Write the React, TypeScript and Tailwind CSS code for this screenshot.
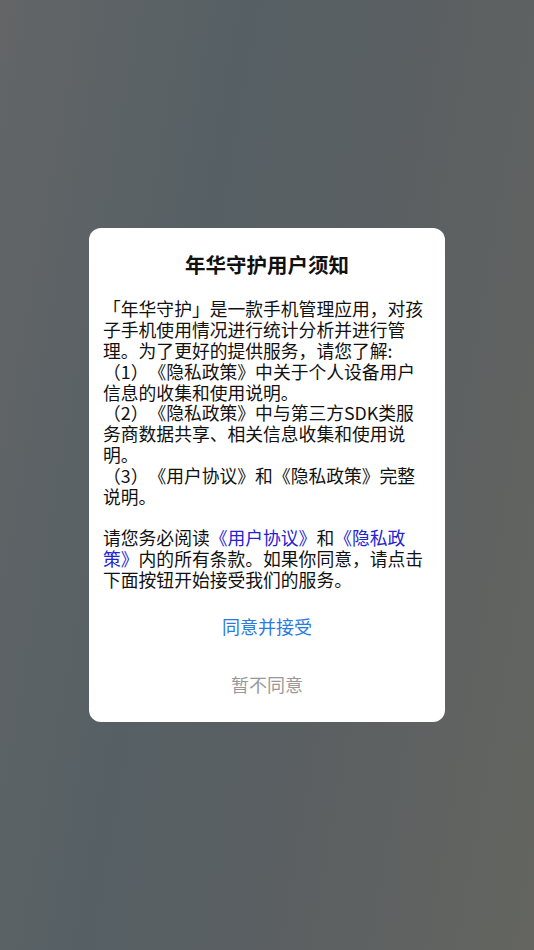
import React from 'react';

const font = { fontFamily: '"Noto Sans CJK SC", "Noto Sans", sans-serif' };

const Link = ({ children }: { children: React.ReactNode }) => (
  <span className="text-[#2323d4]">{children}</span>
);

const App = () => {
  const intro = [
    '「年华守护」是一款手机管理应用，对孩',
    '子手机使用情况进行统计分析并进行管',
    '理。为了更好的提供服务，请您了解:',
    '（1）《隐私政策》中关于个人设备用户',
    '信息的收集和使用说明。',
    '（2）《隐私政策》中与第三方SDK类服',
    '务商数据共享、相关信息收集和使用说',
    '明。',
    '（3）《用户协议》和《隐私政策》完整',
    '说明。',
  ];

  return (
    <div
      className="min-h-screen w-full flex items-center justify-center bg-[linear-gradient(100deg,#636567_0%,#566064_35%,#5a5f62_60%,#646560_100%)]"
      style={font}
    >
      <div className="w-[356px] bg-white rounded-[12px] pt-[22px] pb-[26px] px-[14px]">
        {/* Title */}
        <h1 className="text-center text-[20.5px] leading-[28px] font-bold text-[#111]">
          年华守护用户须知
        </h1>

        {/* Body */}
        <div className="mt-[20px] text-[17.8px] leading-[20.8px] text-[#111] whitespace-nowrap [text-spacing-trim:space-all]">
          {intro.map((line, i) => (
            <div key={i}>{line}</div>
          ))}
          <div className="h-[20.8px]" />
          <div>
            请您务必阅读<Link>《用户协议》</Link>和<Link>《隐私政</Link>
          </div>
          <div>
            <Link>策》</Link>内的所有条款。如果你同意，请点击
          </div>
          <div>下面按钮开始接受我们的服务。</div>
        </div>

        {/* Actions */}
        <div className="mt-[24px] flex flex-col items-center">
          <button className="text-[18px] leading-[24px] text-[#2a7ae2]">同意并接受</button>
          <button className="mt-[34px] text-[18px] leading-[24px] text-[#999999]">暂不同意</button>
        </div>
      </div>
    </div>
  );
};

export default App;
